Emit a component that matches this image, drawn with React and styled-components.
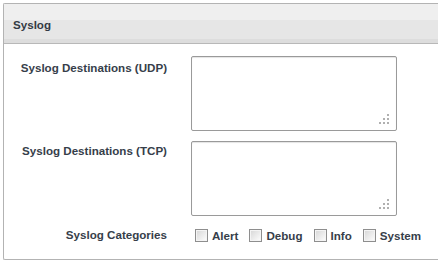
import React from "react";
import styled, { createGlobalStyle } from "styled-components";

const GlobalStyle = createGlobalStyle`
  html, body {
    margin: 0;
    padding: 0;
    background: #ffffff;
    overflow: hidden;
  }
  body {
    font-family: "Liberation Sans", Arial, sans-serif;
    font-size: 11.6px;
    color: #363e4a;
  }
`;

const Panel = styled.section`
  margin: 3px 0 0 3px;
  width: 435px;
  height: 257px;
  box-sizing: border-box;
  border: 1px solid #b3b3b3;
  border-right: none;
  border-radius: 2px 0 0 2px;
  background: #fff;
  display: flex;
  flex-direction: column;
`;

const Header = styled.header`
  height: 40px;
  flex-shrink: 0;
  box-sizing: border-box;
  padding: 2px 0 0 9px;
  display: flex;
  align-items: center;
  font-weight: bold;
  color: #333a44;
  background: linear-gradient(
    to bottom,
    #efefef 0,
    #efefef 16px,
    #e6e6e6 16px,
    #e6e6e6 35px,
    #dddddd 35px
  );
  border-bottom: 1px solid #b8b8b8;
`;

const Form = styled.div`
  display: grid;
  grid-template-columns: 163px 206px;
  column-gap: 24px;
  row-gap: 10px;
  padding-top: 12px;
`;

const Label = styled.label`
  text-align: right;
  font-weight: bold;
  padding-top: ${(p) => p.$top || 0}px;
  align-self: ${(p) => (p.$center ? "center" : "start")};
`;

const AreaWrap = styled.div`
  position: relative;
  width: 206px;
  height: 75px;
`;

const Area = styled.textarea`
  width: 100%;
  height: 100%;
  box-sizing: border-box;
  border: 1px solid #9a9a9a;
  border-radius: 2px;
  box-shadow: inset 0 1px 1px #e4e4e4;
  resize: none;
  margin: 0;
  padding: 2px;
  font-family: inherit;
  outline: none;
`;

const Grip = styled.svg`
  position: absolute;
  right: 8px;
  bottom: 7px;
  pointer-events: none;
`;

const Checks = styled.div`
  display: flex;
  align-items: center;
  gap: 11px;
  margin: 3px 0 0 4px;
  white-space: nowrap;
`;

const Check = styled.label`
  display: flex;
  align-items: center;
  gap: 4px;
  font-weight: bold;
`;

const Box = styled.input.attrs({ type: "checkbox" })`
  appearance: none;
  margin: 0;
  width: 13px;
  height: 13px;
  box-sizing: border-box;
  border: 1px solid #8e8e8e;
  background: linear-gradient(135deg, #d6d6d6 0%, #f2f2f2 70%, #ffffff 100%);
  box-shadow: inset 0 0 0 1px #f4f4f4;
`;

const ResizeGrip = () => (
  <Grip width="10" height="10" viewBox="0 0 10 10">
    <g fill="#b0b0b0">
      <rect x="8" y="0" width="2" height="2" />
      <rect x="4" y="4" width="2" height="2" />
      <rect x="8" y="4" width="2" height="2" />
      <rect x="0" y="8" width="2" height="2" />
      <rect x="4" y="8" width="2" height="2" />
      <rect x="8" y="8" width="2" height="2" />
    </g>
  </Grip>
);

const categories = ["Alert", "Debug", "Info", "System"];

export default function App() {
  return (
    <>
      <GlobalStyle />
      <Panel>
        <Header>Syslog</Header>
        <Form>
          <Label $top={5}>Syslog Destinations (UDP)</Label>
          <AreaWrap>
            <Area />
            <ResizeGrip />
          </AreaWrap>
          <Label $top={3}>Syslog Destinations (TCP)</Label>
          <AreaWrap>
            <Area />
            <ResizeGrip />
          </AreaWrap>
          <Label $center>Syslog Categories</Label>
          <Checks>
            {categories.map((c) => (
              <Check key={c}>
                <Box />
                {c}
              </Check>
            ))}
          </Checks>
        </Form>
      </Panel>
    </>
  );
}
